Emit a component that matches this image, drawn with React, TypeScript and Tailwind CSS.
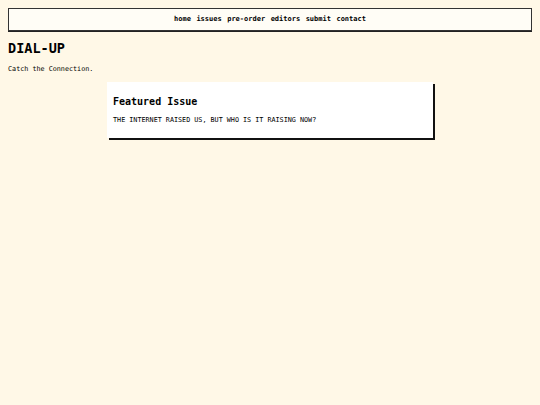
export default function App() {
  const links = ["home", "issues", "pre-order", "editors", "submit", "contact"];

  return (
    <div
      className="min-h-[405px] bg-[#fff8e7] px-2 pt-[8px] text-black"
      style={{ fontFamily: '"DejaVu Sans Mono", monospace' }}
    >
      <nav className="flex h-[23px] items-center justify-center gap-[5.5px] border border-[#333] bg-[#fffdf6] shadow-[0_1px_0_#222]">
        {links.map((l) => (
          <a key={l} href="#" className="text-[7px] font-bold text-black">
            {l}
          </a>
        ))}
      </nav>

      <h1 className="mt-[8px] text-[13.5px] font-bold leading-[18px]">DIAL-UP</h1>
      <p className="mt-[8px] text-[6.75px] leading-[9px]">Catch the Connection.</p>

      <div className="mx-auto mt-[8px] w-[326px] bg-white px-[6px] pb-[13px] pt-[13px] shadow-[2px_2px_0_#111]">
        <h2 className="text-[10px] font-bold leading-[13px]">Featured Issue</h2>
        <p className="mt-[8px] text-[6.75px] leading-[9px]">
          THE INTERNET RAISED US, BUT WHO IS IT RAISING NOW?
        </p>
      </div>
    </div>
  );
}
